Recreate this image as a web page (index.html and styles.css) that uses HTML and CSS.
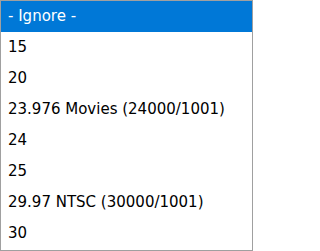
FILE: index.html
```html
<!DOCTYPE html>
<html>
<head>
<meta charset="utf-8">
<link rel="stylesheet" href="styles.css">
</head>
<body>
<ul class="list">
  <li class="item selected">- Ignore -</li>
  <li class="item">15</li>
  <li class="item">20</li>
  <li class="item">23.976 Movies (24000/1001)</li>
  <li class="item">24</li>
  <li class="item">25</li>
  <li class="item">29.97 NTSC (30000/1001)</li>
  <li class="item">30</li>
</ul>
</body>
</html>
```
FILE: styles.css
```css
html, body {
  margin: 0;
  padding: 0;
  background: #fff;
}
.list {
  box-sizing: border-box;
  width: 253px;
  height: 251px;
  margin: 0;
  padding: 0;
  list-style: none;
  border: 1px solid #a0a0a0;
  overflow: hidden;
  font-family: "DejaVu Sans", sans-serif;
  font-size: 15px;
  color: #000;
}
.item {
  height: 31px;
  line-height: 31px;
  padding-left: 7px;
  white-space: nowrap;
}
.selected {
  background: #0078d7;
  color: #fff;
}
```
